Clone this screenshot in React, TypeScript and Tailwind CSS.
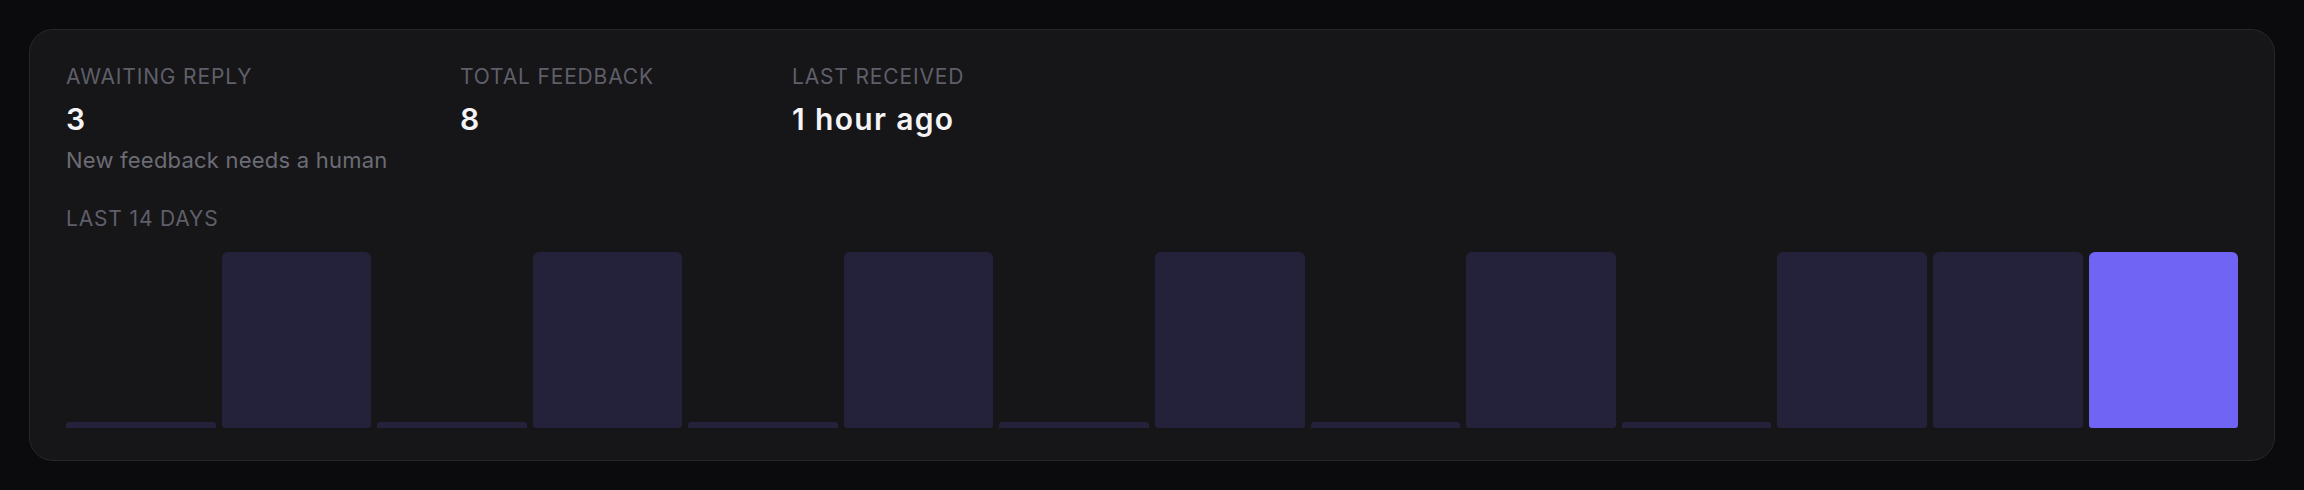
const days = [0, 1, 0, 1, 0, 1, 0, 1, 0, 1, 0, 1, 1, 1]

function Stat({ label, value, note, width }: { label: string; value: string; note?: string; width: string }) {
  return (
    <div className={`flex flex-col ${width}`}>
      <div className="text-[21px] leading-[30px] tracking-[0.04em] uppercase text-[#5f5f69]">{label}</div>
      <div className="mt-[6px] text-[30px] leading-[42px] font-semibold tracking-[0.045em] text-[#f4f4f6]">{value}</div>
      {note && <div className="mt-[5px] text-[22px] leading-[30px] tracking-[0.01em] text-[#6c6c75]">{note}</div>}
    </div>
  )
}

export default function App() {
  const max = Math.max(...days)
  return (
    <div className="min-h-[490px] bg-[#0b0b0d] p-[29px] font-['Inter',sans-serif]">
      <div className="rounded-[24px] border border-[#28282b] bg-[#161618] px-[36px] pt-[32px] pb-[32px]">
        <div className="flex">
          <Stat label="Awaiting reply" value="3" note="New feedback needs a human" width="w-[394px]" />
          <Stat label="Total feedback" value="8" width="w-[332px]" />
          <Stat label="Last received" value="1 hour ago" width="w-[300px]" />
        </div>

        <div className="mt-[29px] text-[21px] leading-[30px] tracking-[0.04em] uppercase text-[#5f5f69]">Last 14 days</div>

        <div className="mt-[18px] flex h-[176px] items-end gap-[6px]">
          {days.map((d, i) => {
            const last = i === days.length - 1
            return (
              <div
                key={i}
                className={`flex-1 ${d > 0 ? 'rounded-t-[6px] rounded-b-[3px]' : 'rounded-t-[3px]'} ${last ? 'bg-[#6f64f4]' : 'bg-[#23223a]'}`}
                style={{ height: d > 0 ? `${(d / max) * 100}%` : '6px' }}
              />
            )
          })}
        </div>
      </div>
    </div>
  )
}
